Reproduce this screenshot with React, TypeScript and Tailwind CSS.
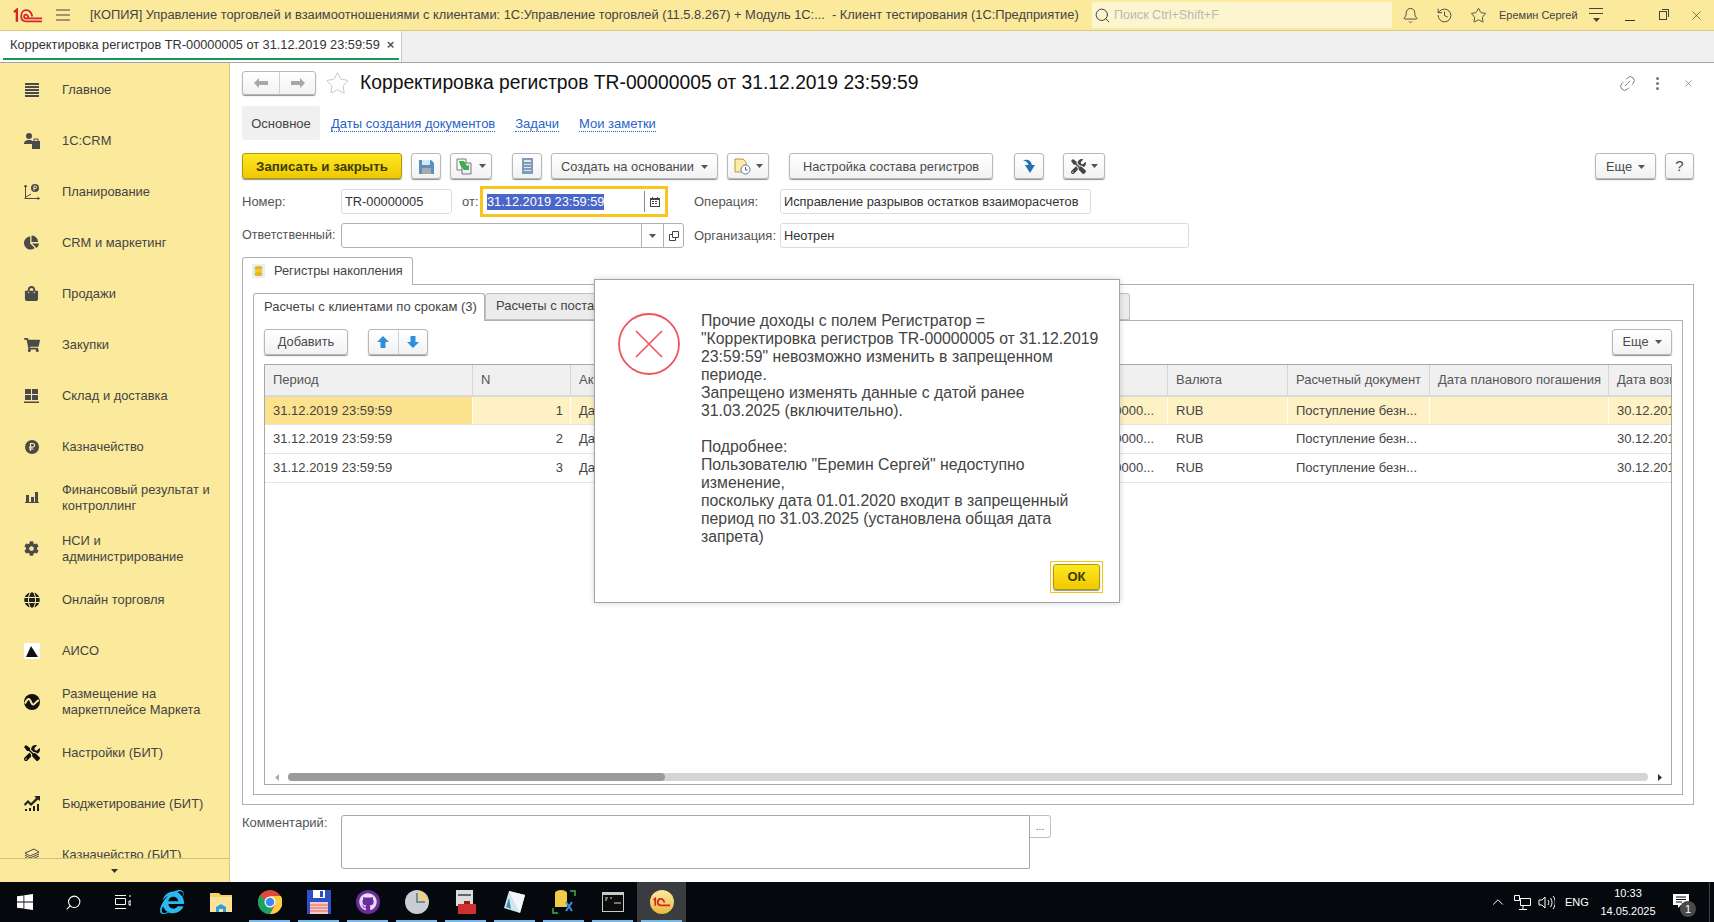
import type { ReactNode } from "react";
import { Bell, History, Star, Link2, Search, ChevronUp, X } from "lucide-react";
import {
  FaChartPie,
  FaShoppingBag,
  FaShoppingCart,
  FaCog,
  FaGlobe,
  FaTools,
  FaGithub,
  FaInternetExplorer,
} from "react-icons/fa";

const font = "font-['Liberation_Sans',Arial,sans-serif]";
const btn =
  "flex h-[26px] items-center justify-center rounded-[3px] border border-[#b8b8b8] bg-gradient-to-b from-white to-[#f2f2f2] text-[12.800px] text-[#4b4b4b] shadow-[0_1px_1px_#8f8f8f]";
const input = "flex h-[25px] items-center rounded-[3px] border border-[#dcdcdc] bg-white px-[3px] text-[12.800px] text-[#333]";
const rowCols = "grid grid-cols-[208px_98px_489px_108px_120px_142px_179px_62px]";

function Caret({ color = "#555" }: { color?: string }) {
  return (
    <svg width="7" height="4" viewBox="0 0 7 4" className="shrink-0">
      <path d="M0 0h7L3.500 4z" fill={color} />
    </svg>
  );
}

function Logo1C() {
  return (
    <svg width="30" height="15" viewBox="0 0 30 15" fill="none" stroke="#d8232a">
      <path d="M1 4l3-2.500V14" strokeWidth="2.400" />
      <path d="M20 8.500C19 4 16 2 13.500 2 10.500 2 8.500 4.500 8.500 8s2 5.500 5 5.500H30" strokeWidth="1.800" />
      <path d="M16 9.500c-.5-2-1.500-3-2.700-3-1.200 0-1.800 1-1.800 2 0 1 .8 2 2 2H30" strokeWidth="1.800" />
    </svg>
  );
}

function Burger({ w = 14, gap = 5, color = "#444" }: { w?: number; gap?: number; color?: string }) {
  return (
    <svg width={w} height={gap * 2 + 2} viewBox={`0 0 ${w} ${gap * 2 + 2}`}>
      <path d={`M0 1h${w}M0 ${gap + 1}h${w}M0 ${gap * 2 + 1}h${w}`} stroke={color} strokeWidth="1.200" />
    </svg>
  );
}

function TopBar() {
  return (
    <div className="flex h-[31px] shrink-0 items-center border-b border-[#dcca7e] bg-[#fbe99c] text-[#444]">
      <div className="ml-[13px] flex w-[29px] items-center">
        <Logo1C />
      </div>
      <div className="ml-[14px] flex w-[14px]">
        <Burger />
      </div>
      <div className="ml-[20px] w-[992px] shrink-0 whitespace-nowrap text-[12.850px] text-[#444]">
        [КОПИЯ] Управление торговлей и взаимоотношениями с клиентами: 1С:Управление торговлей (11.5.8.267) + Модуль 1С:...&nbsp;&nbsp;- Клиент тестирования (1С:Предприятие)
      </div>
      <div className="ml-[10px] flex h-[26px] w-[300px] shrink-0 items-center rounded-[2px] bg-[#fdf5d0] pl-[2px]">
        <Search size={17} strokeWidth={1.300} className="text-[#333]" />
        <span className="ml-[3px] text-[12.500px] text-[#b9b9b0]">Поиск Ctrl+Shift+F</span>
      </div>
      <Bell size={17} strokeWidth={1.300} className="ml-[10px] shrink-0" />
      <History size={17} strokeWidth={1.300} className="ml-[17px] shrink-0" />
      <Star size={17} strokeWidth={1.300} className="ml-[17px] shrink-0" />
      <span className="ml-[12px] w-[78px] shrink-0 whitespace-nowrap text-[11px] text-[#444]">Еремин Сергей</span>
      <div className="ml-[12px] flex w-[14px] shrink-0 flex-col items-center gap-[4px]">
        <div className="h-px w-[14px] bg-[#444]" />
        <div className="h-px w-[14px] bg-[#444]" />
        <Caret color="#444" />
      </div>
      <div className="ml-[22px] mt-[10px] h-px w-[10px] shrink-0 bg-[#333]" />
      <div className="relative ml-[24px] mt-[1px] h-[9px] w-[8px] shrink-0 border border-[#444]">
        <div className="absolute -right-[3px] -top-[3px] h-[8px] w-[7px] border-r border-t border-[#444]" />
      </div>
      <X size={15} strokeWidth={1} className="ml-[22px] shrink-0 text-[#333]" />
    </div>
  );
}

function TabBar() {
  return (
    <div className="flex h-[32px] shrink-0 border-b border-[#a5a5a5] bg-[#f0f0f0]">
      <div className="flex w-[402px] flex-col border-r border-[#c8c8c8] bg-white">
        <div className="flex h-[27px] items-center whitespace-nowrap pl-[10px] text-[12.770px] text-[#333]">
          Корректировка регистров TR-00000005 от 31.12.2019 23:59:59
          <span className="ml-[7px] text-[13px] font-bold text-[#555]">×</span>
        </div>
        <div className="ml-[3px] h-[2px] w-[396px] bg-[#15995a]" />
      </div>
    </div>
  );
}

const ic = "#4a4a4a";
const sidebarItems: { label: ReactNode; icon: ReactNode }[] = [
  {
    label: "Главное",
    icon: (
      <svg width="14" height="14" viewBox="0 0 14 14" fill={ic}>
        <path d="M0 0h14v2H0zM0 3h14v2H0zM0 6h14v2H0zM0 9h14v2H0zM0 12h14v2H0z" />
      </svg>
    ),
  },
  {
    label: "1С:CRM",
    icon: (
      <svg width="16" height="16" viewBox="0 0 16 16" fill={ic}>
        <circle cx="5" cy="3" r="3" />
        <path d="M0 11c0-3 2-4 5-4s3 .5 3 1v3zM8 8h8v8H8z" />
        <path d="M10 8V6h4v2" fill="none" stroke={ic} />
      </svg>
    ),
  },
  {
    label: "Планирование",
    icon: (
      <svg width="16" height="16" viewBox="0 0 16 16" fill="none" stroke={ic}>
        <path d="M1.500 1v14M.5 14.500h15M1.500 1L0 3M1.500 1L3 3M15.500 14.500l-2-1.500M15.500 14.500l-2 1M2 13l5-3" />
        <circle cx="11" cy="4" r="4" fill={ic} stroke="none" />
        <path d="M10 6.500V2h1.500a1 1 0 010 2.500H9.500" stroke="#fbe99c" />
      </svg>
    ),
  },
  { label: "CRM и маркетинг", icon: <FaChartPie size={15} color={ic} /> },
  { label: "Продажи", icon: <FaShoppingBag size={15} color={ic} /> },
  { label: "Закупки", icon: <FaShoppingCart size={16} color={ic} /> },
  {
    label: "Склад и доставка",
    icon: (
      <svg width="15" height="14" viewBox="0 0 15 14" fill={ic}>
        <path d="M1 0h6v5H1zM8 0h6v5H8zM1 6h6v5H1zM8 6h6v5H8zM0 12.500h15V14H0z" />
      </svg>
    ),
  },
  {
    label: "Казначейство",
    icon: (
      <svg width="14" height="14" viewBox="0 0 14 14">
        <circle cx="7" cy="7" r="7" fill={ic} />
        <path d="M5.500 11V3.500h2.200a1.800 1.800 0 010 3.700H4M4 9h4.500" stroke="#fbe99c" fill="none" strokeWidth="1.200" />
      </svg>
    ),
  },
  {
    label: (
      <>
        Финансовый результат и
        <br />
        контроллинг
      </>
    ),
    icon: (
      <svg width="14" height="11" viewBox="0 0 14 11" fill={ic}>
        <path d="M1 3h3v7H1zM6 5h3v5H6zM10 0h3v10h-3zM0 10h14v1H0z" />
      </svg>
    ),
  },
  {
    label: (
      <>
        НСИ и
        <br />
        администрирование
      </>
    ),
    icon: <FaCog size={15} color={ic} />,
  },
  { label: "Онлайн торговля", icon: <FaGlobe size={16} color="#222" /> },
  {
    label: "АИСО",
    icon: (
      <svg width="16" height="16" viewBox="0 0 16 16">
        <path d="M0 0h16v16H0z" fill="#fff" />
        <path d="M7 3L2 14h12z" fill="#111" />
      </svg>
    ),
  },
  {
    label: (
      <>
        Размещение на
        <br />
        маркетплейсе Маркета
      </>
    ),
    icon: (
      <svg width="16" height="16" viewBox="0 0 16 16">
        <circle cx="8" cy="8" r="8" fill="#111" />
        <path d="M1 9.500C3 5 4.500 4 6 6s1.500 5 3.500 4.500S13 6 15 6.500" stroke="#fbe99c" strokeWidth="2" fill="none" />
      </svg>
    ),
  },
  { label: "Настройки (БИТ)", icon: <FaTools size={16} color="#111" /> },
  {
    label: "Бюджетирование (БИТ)",
    icon: (
      <svg width="16" height="15" viewBox="0 0 16 15" fill="#222">
        <path d="M0 8l4-4 3 3 5-5-1.500-2H16v5l-2-1.500-7 6.500-3-3-3 3z" />
        <path d="M1 13h2v2H1zM5 12h2v3H5zM9 10h2v5H9zM13 8h2v7h-2z" />
      </svg>
    ),
  },
  {
    label: "Казначейство (БИТ)",
    icon: (
      <svg width="16" height="13" viewBox="0 0 16 13" fill="none" stroke={ic}>
        <path d="M1 5l9-4 5 3-9 4zM1 7l5 3 9-4M1 9l5 3 9-4" />
      </svg>
    ),
  },
];

function Sidebar() {
  return (
    <div className="flex w-[230px] shrink-0 flex-col border-r border-[#d9c884] bg-[#fbe99c]">
      <div className="min-h-0 flex-1 overflow-hidden pt-[1px]">
        {sidebarItems.map((item, i) => (
          <div key={i} className="flex h-[51px] items-center">
            <div className="flex w-[62px] shrink-0 justify-center pl-[1px]">{item.icon}</div>
            <div className="text-[12.900px] leading-[16px] text-[#444]">{item.label}</div>
          </div>
        ))}
      </div>
      <div className="flex h-[24px] shrink-0 items-center justify-center border-t border-[#cfc07c]">
        <Caret color="#333" />
      </div>
    </div>
  );
}

function FormToolbar() {
  return (
    <div className="mt-[13px] flex">
      <div className={`${btn} w-[160px] !border-[#b09a00] !from-[#fee81f] !to-[#efc800] pt-px !text-[13.300px] font-bold !text-[#3d3d00]`}>Записать и закрыть</div>
      <div className={`${btn} ml-[9px] w-[30px]`}>
        <svg width="15" height="15" viewBox="0 0 15 15">
          <path d="M0 1h12l3 3v11H0z" fill="#5b8fc0" />
          <path d="M3 1h8v5H3z" fill="#d8e6f2" />
          <path d="M3 9h9v6H3z" fill="#a9a9a9" />
        </svg>
      </div>
      <div className={`${btn} ml-[9px] w-[42px] gap-[6px]`}>
        <svg width="17" height="17" viewBox="0 0 17 17">
          <path d="M1 1h9v11H1z" fill="#fff" stroke="#777" />
          <path d="M6 5h9v11H6z" fill="#eef" stroke="#777" />
          <path d="M3 3h5l3 5 2-1v5H8L4 7z" fill="#3fae49" />
        </svg>
        <Caret />
      </div>
      <div className={`${btn} ml-[20px] w-[30px]`}>
        <svg width="11" height="16" viewBox="0 0 11 16">
          <path d="M0 0h11v16H0z" fill="#7f9bb8" />
          <path d="M2 2h7v2H2zM2 6h7v1H2zM2 9h7v1H2zM2 12h7v1H2z" fill="#dde6ef" />
        </svg>
      </div>
      <div className={`${btn} ml-[9px] w-[167px] gap-[7px] pt-px`}>
        Создать на основании
        <Caret />
      </div>
      <div className={`${btn} ml-[9px] w-[42px] gap-[5px]`}>
        <svg width="17" height="17" viewBox="0 0 17 17">
          <path d="M1 1h8l3 3v10H1z" fill="#fde9a8" stroke="#b89a3c" />
          <circle cx="11.500" cy="11.500" r="4.500" fill="#fff" stroke="#4a7fb5" />
          <path d="M11.500 9v3h2" stroke="#d33" fill="none" />
        </svg>
        <Caret />
      </div>
      <div className={`${btn} ml-[20px] w-[204px] pt-px`}>Настройка состава регистров</div>
      <div className={`${btn} ml-[21px] w-[30px]`}>
        <svg width="14" height="16" viewBox="0 0 14 16">
          <path d="M1 2.500c4-2 8-.5 9 4.500h3l-5 8-5-8h3.500C6 4.500 4 3 1 2.500z" fill="#2270b4" />
        </svg>
      </div>
      <div className={`${btn} ml-[19px] w-[42px] gap-[5px]`}>
        <FaTools size={15} color="#444" />
        <Caret />
      </div>
      <div className="flex-1" />
      <div className={`${btn} w-[61px] gap-[6px] pt-px`}>
        Еще
        <Caret />
      </div>
      <div className={`${btn} ml-[9px] w-[29px] pt-px !text-[15px]`}>?</div>
    </div>
  );
}

type Row = { active?: boolean; n: number };
const rows: Row[] = [{ active: true, n: 1 }, { n: 2 }, { n: 3 }];

function RegTable() {
  return (
    <div className="mt-[9px] flex min-h-0 flex-1 flex-col overflow-hidden border border-[#a8a8a8] bg-white text-[13px] text-[#444]">
      <div className={`${rowCols} h-[32px] shrink-0 border-b-2 border-[#d9d9d9] bg-[#f0f0f0] text-[#555]`}>
        {["Период", "N", "Акт", "", "Валюта", "Расчетный документ", "Дата планового погашения", "Дата возврата"].map((h, i) => (
          <div key={i} className="flex items-center overflow-hidden whitespace-nowrap border-r border-[#d6d6d6] px-[8px] pb-px last:border-r-0">
            {h}
          </div>
        ))}
      </div>
      {rows.map((r) => {
        const bg = r.active ? "bg-[#fef1c4]" : "bg-white";
        const cell = `flex items-center overflow-hidden whitespace-nowrap border-r border-white px-[8px] ${bg}`;
        return (
          <div key={r.n} className={`${rowCols} ${r.active ? "h-[28px]" : "h-[29px]"} shrink-0 border-b border-[#e4e4e4]`}>
            <div className={`${cell} ${r.active ? "!bg-[#fde28e]" : ""}`}>31.12.2019 23:59:59</div>
            <div className={`${cell} justify-end !pr-[7px]`}>{r.n}</div>
            <div className={cell}>Да</div>
            <div className={`${cell} justify-end !pr-[13px]`}>0000...</div>
            <div className={cell}>RUB</div>
            <div className={cell}>Поступление безн...</div>
            <div className={cell} />
            <div className={`${cell} border-r-0`}>30.12.2019</div>
          </div>
        );
      })}
      <div className="flex-1" />
      <div className="mb-[3px] flex h-[8px] shrink-0 items-center">
        <div className="flex w-[23px] justify-center">
          <svg width="4" height="7" viewBox="0 0 4 7">
            <path d="M4 0v7L0 3.500z" fill="#aaa" />
          </svg>
        </div>
        <div className="h-[8px] flex-1 rounded-[4px] bg-[#d4d4d4]">
          <div className="h-[8px] w-[377px] rounded-[4px] bg-[#9b9b9b]" />
        </div>
        <div className="flex w-[23px] justify-center">
          <svg width="4" height="7" viewBox="0 0 4 7">
            <path d="M0 0v7l4-3.500z" fill="#333" />
          </svg>
        </div>
      </div>
    </div>
  );
}

function Form() {
  return (
    <div className="flex min-w-0 flex-1 flex-col bg-white pl-[12px] pr-[20px] pt-[8px]">
      <div className="flex h-[24px] items-center">
        <div className={`${btn} !h-[24px] w-[74px] !justify-start`}>
          <div className="flex h-full w-[37px] items-center justify-center border-r border-[#d0d0d0]">
            <svg width="14" height="10" viewBox="0 0 14 10">
              <path d="M0 5l5-5v3h9v4H5v3z" fill="#a8a8a8" />
            </svg>
          </div>
          <div className="flex h-full w-[35px] items-center justify-center">
            <svg width="14" height="10" viewBox="0 0 14 10">
              <path d="M14 5L9 0v3H0v4h9v3z" fill="#a8a8a8" />
            </svg>
          </div>
        </div>
        <Star size={25} strokeWidth={0.800} className="ml-[9px] text-[#bdbdbd]" />
        <div className="ml-[10px] whitespace-nowrap text-[19.300px] text-[#111]">Корректировка регистров TR-00000005 от 31.12.2019 23:59:59</div>
        <div className="flex-1" />
        <Link2 size={19} strokeWidth={1} className="-rotate-45 text-[#666]" />
        <div className="ml-[19px] flex flex-col gap-[2px]">
          <div className="h-[3px] w-[3px] rounded-full bg-[#777]" />
          <div className="h-[3px] w-[3px] rounded-full bg-[#777]" />
          <div className="h-[3px] w-[3px] rounded-full bg-[#777]" />
        </div>
        <X size={11} strokeWidth={1.200} className="ml-[24px] text-[#555]" />
      </div>

      <div className="mt-[11px] flex h-[34px] items-center text-[13px]">
        <div className="flex h-[34px] w-[78px] items-center justify-center rounded-[3px] bg-[#f0f0f0] pt-[2px] text-[#444]">Основное</div>
        <a className="ml-[11px] mt-[2px] border-b border-dotted border-[#2a63c4] leading-[14px] text-[#2a63c4]">Даты создания документов</a>
        <a className="ml-[20px] mt-[2px] border-b border-dotted border-[#2a63c4] leading-[14px] text-[#2a63c4]">Задачи</a>
        <a className="ml-[20px] mt-[2px] border-b border-dotted border-[#2a63c4] leading-[14px] text-[#2a63c4]">Мои заметки</a>
      </div>

      <FormToolbar />

      <div className="mt-[10px] flex h-[25px] items-center text-[13px] text-[#555]">
        <div className="w-[99px] shrink-0">Номер:</div>
        <div className={`${input} w-[111px]`}>TR-00000005</div>
        <div className="ml-[10px] w-[18px] shrink-0">от:</div>
        <div className="-my-[3px] flex h-[31px] w-[188px] shrink-0 items-center border-[3px] border-[#f7c51e] bg-white pl-[4px] text-[12.800px]">
          <span className="bg-[#4a66c9] leading-[16px] text-white">31.12.2019 23:59:59</span>
          <div className="flex-1" />
          <div className="h-[21px] w-px bg-[#888]" />
          <div className="flex w-[20px] justify-center pr-[1px]">
            <svg width="10" height="10" viewBox="0 0 10 10" fill="#444">
              <path d="M0 1h10v9H0zM1 3v6h8V3z" fillRule="evenodd" />
              <path d="M2 0h1v2H2zM7 0h1v2H7zM2 4h2v1H2zM5 4h2v1H5zM2 6h2v1H2zM5 6h2v1H5z" />
            </svg>
          </div>
        </div>
        <div className="ml-[26px] w-[86px] shrink-0">Операция:</div>
        <div className={`${input} w-[311px] whitespace-nowrap`}>Исправление разрывов остатков взаиморасчетов</div>
      </div>

      <div className="mt-[9px] flex h-[25px] items-center text-[13px] text-[#555]">
        <div className="w-[99px] shrink-0 text-[12.600px]">Ответственный:</div>
        <div className="flex h-[25px] w-[343px] rounded-[3px] border border-[#b0b0b0] bg-white">
          <div className="flex-1" />
          <div className="flex w-[22px] items-center justify-center border-l border-[#b0b0b0]">
            <Caret />
          </div>
          <div className="flex w-[20px] items-center justify-center border-l border-[#b0b0b0]">
            <svg width="10" height="10" viewBox="0 0 10 10" fill="none" stroke="#444">
              <path d="M3.500.5h6v6h-6zM3.500 3.500H.5v6h6V6.500" />
            </svg>
          </div>
        </div>
        <div className="ml-[10px] w-[86px] shrink-0">Организация:</div>
        <div className={`${input} w-[409px]`}>Неотрен</div>
      </div>

      <div className="mt-[9px] flex">
        <div className="relative z-10 -mb-px flex h-[28px] w-[171px] items-center rounded-t-[3px] border border-b-0 border-[#b0b0b0] bg-white pb-[2px] pl-[9px] text-[12.800px] text-[#444]">
          <svg width="13" height="14" viewBox="0 0 13 14">
            <path d="M0 0h13v14H0z" fill="#e8eef5" />
            <ellipse cx="6.500" cy="4" rx="4" ry="2" fill="#e6b422" />
            <ellipse cx="6.500" cy="7" rx="4" ry="2" fill="#f2c838" />
            <ellipse cx="6.500" cy="10" rx="4" ry="2" fill="#e6b422" />
          </svg>
          <span className="ml-[9px] whitespace-nowrap">Регистры накопления</span>
        </div>
      </div>
      <div className="flex min-h-0 flex-1 flex-col border border-[#b0b0b0] px-[10px] pb-[9px] pt-[8px]">
        <div className="flex text-[13px]">
          <div className="relative z-10 -mb-px flex h-[28px] w-[232px] items-center rounded-t-[3px] border border-b-0 border-[#b0b0b0] bg-white pb-[2px] pl-[10px] text-[#444]">
            Расчеты с клиентами по срокам (3)
          </div>
          <div className="flex h-[27px] w-[645px] items-center rounded-t-[3px] border border-[#c0c0c0] bg-[#ececec] pb-[1px] pl-[10px] text-[#444]">
            Расчеты с поставщиками по срокам
          </div>
        </div>
        <div className="flex min-h-0 flex-1 flex-col border border-[#b0b0b0] px-[10px] pb-[9px] pt-[8px]">
          <div className="flex">
            <div className={`${btn} w-[84px]`}>Добавить</div>
            <div className={`${btn} ml-[20px] w-[60px]`}>
              <div className="flex h-full flex-1 items-center justify-center border-r border-[#d0d0d0]">
                <svg width="12" height="12" viewBox="0 0 12 12">
                  <path d="M6 0l6 6H8.500v6h-5V6H0z" fill="#2f8fdc" />
                </svg>
              </div>
              <div className="flex h-full flex-1 items-center justify-center">
                <svg width="12" height="12" viewBox="0 0 12 12">
                  <path d="M6 12L0 6h3.500V0h5v6H12z" fill="#2f8fdc" />
                </svg>
              </div>
            </div>
            <div className="flex-1" />
            <div className={`${btn} w-[60px] gap-[6px]`}>
              Еще
              <Caret />
            </div>
          </div>
          <RegTable />
        </div>
      </div>

      <div className="mb-[13px] mt-[10px] flex h-[54px] shrink-0 text-[13px] leading-[16px] text-[#555]">
        <div className="w-[99px] shrink-0">Комментарий:</div>
        <div className="h-[54px] w-[689px] rounded-l-[3px] border border-[#a8a8a8] bg-white" />
        <div className="flex h-[23px] w-[21px] items-center justify-center rounded-r-[3px] border border-l-0 border-[#c0c0c0] text-[10px] text-[#555]">...</div>
      </div>
    </div>
  );
}

function ErrorDialog() {
  return (
    <div className="absolute left-[594px] top-[279px] z-20 w-[526px] border border-[#a3a3a3] bg-white pb-[9px] pl-[23px] pr-[16px] pt-[33px] shadow-[0_0_6px_rgba(0,0,0,0.18)]">
      <div className="flex">
        <svg width="62" height="62" viewBox="0 0 62 62" fill="none" stroke="#f0545c" className="shrink-0">
          <circle cx="31" cy="31" r="30" strokeWidth="1.800" />
          <path d="M18 18l26 26M44 18L18 44" strokeWidth="1.600" />
        </svg>
        <div className="ml-[21px] -mt-px mb-px whitespace-nowrap text-[15.800px] leading-[18px] text-[#444]">
          Прочие доходы с полем Регистратор =
          <br />
          "Корректировка регистров TR-00000005 от 31.12.2019
          <br />
          23:59:59" невозможно изменить в запрещенном
          <br />
          периоде.
          <br />
          Запрещено изменять данные с датой ранее
          <br />
          31.03.2025 (включительно).
          <br />
          <br />
          Подробнее:
          <br />
          Пользователю "Еремин Сергей" недоступно
          <br />
          изменение,
          <br />
          поскольку дата 01.01.2020 входит в запрещенный
          <br />
          период по 31.03.2025 (установлена общая дата
          <br />
          запрета)
        </div>
      </div>
      <div className="mt-[14px] flex justify-end">
        <div className="border border-[#f5c518] p-[2px]">
          <div className={`${btn} w-[47px] !border-[#b09a00] !from-[#fee81f] !to-[#efc800] !text-[13px] font-bold !text-[#3d3d00]`}>ОК</div>
        </div>
      </div>
    </div>
  );
}

function Tb({ children, active, run }: { children: ReactNode; active?: boolean; run?: boolean }) {
  return (
    <div className={`relative flex h-[40px] w-[49px] shrink-0 items-center justify-center ${active ? "bg-[#3a3c40]" : ""}`}>
      {children}
      {run && <div className="absolute bottom-0 left-[4px] right-[4px] h-[2px] bg-[#76b9ed]" />}
    </div>
  );
}

function Taskbar() {
  return (
    <div className="flex h-[40px] shrink-0 items-center bg-[#05080c] text-white">
      <Tb>
        <svg width="16" height="16" viewBox="0 0 16 16" fill="#fff">
          <path d="M0 2.300l6.500-.9v6.200H0zM7.300 1.300L16 0v7.600H7.300zM0 8.400h6.500v6.200L0 13.700zM7.300 8.400H16V16l-8.700-1.200z" />
        </svg>
      </Tb>
      <Tb>
        <Search size={17} strokeWidth={1.500} className="-scale-x-100" />
      </Tb>
      <Tb>
        <svg width="16" height="16" viewBox="0 0 16 16" fill="none" stroke="#fff">
          <path d="M.5 4.500h10v6h-10zM0 1.500h11M0 14.500h11M14 2h2M14 7h2v4h-2z" />
        </svg>
      </Tb>
      <Tb>
        <div className="relative">
          <FaInternetExplorer size={24} color="#2bb8ee" />
        </div>
      </Tb>
      <Tb>
        <svg width="22" height="20" viewBox="0 0 22 20">
          <path d="M0 1h9l2 2h11v17H0z" fill="#f6d365" />
          <path d="M0 5h22v15H0z" fill="#fbe39a" />
          <path d="M6 20v-5l5-3 5 3v5h-3v-3H9v3z" fill="#2f9fe0" />
        </svg>
      </Tb>
      <Tb run>
        <svg width="24" height="24" viewBox="0 0 24 24">
          <circle cx="12" cy="12" r="12" fill="#dd4b3e" />
          <path d="M1.600 18A12 12 0 011.600 6L12 12l5 0 -5 12A12 12 0 011.600 18z" fill="#1aa260" />
          <path d="M12 6h10.900A12 12 0 0112 24l5-9z" fill="#ffce44" />
          <circle cx="12" cy="12" r="5.500" fill="#fff" />
          <circle cx="12" cy="12" r="4.300" fill="#4285f4" />
        </svg>
      </Tb>
      <Tb run>
        <svg width="24" height="24" viewBox="0 0 24 24">
          <path d="M0 0h24v24H0z" fill="#2b4fc4" />
          <path d="M6 0h12v8H6z" fill="#fff" />
          <path d="M13 1h3v6h-3z" fill="#2b4fc4" />
          <path d="M3 12h18v12H3z" fill="#f9c6c6" />
          <path d="M3 15h18M3 18h18M3 21h18" stroke="#d66" />
        </svg>
      </Tb>
      <Tb run>
        <div className="flex h-[24px] w-[24px] items-center justify-center rounded-full bg-[#6a2c9c]">
          <FaGithub size={18} color="#e8dcf5" />
        </div>
      </Tb>
      <Tb run>
        <svg width="24" height="24" viewBox="0 0 24 24">
          <circle cx="12" cy="12" r="12" fill="#c9ced6" />
          <path d="M12 12V1A11 11 0 0123 12z" fill="#f0cf8a" />
          <path d="M12 3v9h8" stroke="#4a7a9a" strokeWidth="1.500" fill="none" />
        </svg>
      </Tb>
      <Tb run>
        <svg width="24" height="24" viewBox="0 0 24 24">
          <path d="M2 0h17v16H2z" fill="#dcdcdc" />
          <path d="M4 4h13v2H4z" fill="#666" />
          <path d="M4 14h18v10H4z" fill="#cf2f2f" />
          <path d="M10 11h6v3h-6z" fill="#8f1f1f" />
        </svg>
      </Tb>
      <Tb run>
        <svg width="24" height="24" viewBox="0 0 24 24">
          <path d="M6 1l16 4-5 18L1 18z" fill="#cfe6ee" />
          <path d="M6 1l16 4-5 18z" fill="#f4f7f9" />
          <path d="M6 8l-3 9 5 2z" fill="#3f8fa8" />
        </svg>
      </Tb>
      <Tb run>
        <svg width="24" height="24" viewBox="0 0 24 24" fill="none">
          <ellipse cx="9" cy="3" rx="6" ry="3" fill="#f0cb45" />
          <path d="M3 3h12v14H3z" fill="#f0cb45" />
          <path d="M1 18v5h5M23 6V1h-5" stroke="#3fae49" strokeWidth="1.500" />
          <path d="M14 12l6 9M20 12l-6 9" stroke="#3b8fe0" strokeWidth="2" />
        </svg>
      </Tb>
      <Tb run>
        <svg width="22" height="20" viewBox="0 0 22 20">
          <path d="M0 0h22v20H0z" fill="#c9c9c9" />
          <path d="M1 3h20v16H1z" fill="#0c0c0c" />
          <path d="M3 6h3M3 8h2M8 6h2M12 11h7" stroke="#ddd" />
        </svg>
      </Tb>
      <Tb run active>
        <div className="flex h-[24px] w-[24px] items-center justify-center rounded-full bg-gradient-to-b from-[#fbeb9a] to-[#e8b93a]">
          <svg width="17" height="10" viewBox="0 0 30 15" fill="none" stroke="#d8232a">
            <path d="M1 4l3-2.500V14" strokeWidth="3" />
            <path d="M20 8.500C19 4 16 2 13.500 2 10.500 2 8.500 4.500 8.500 8s2 5.500 5 5.500H30" strokeWidth="3" />
          </svg>
        </div>
      </Tb>
      <div className="flex-1" />
      <ChevronUp size={18} strokeWidth={1.300} />
      <svg width="17" height="15" viewBox="0 0 17 15" fill="none" stroke="#fff" className="ml-[7px]">
        <path d="M3.500 3.500h13v7h-10V4M9 11v3M5 14.500h8" />
        <path d="M.5.500h5v5h-5z" fill="#05080c" />
      </svg>
      <svg width="17" height="15" viewBox="0 0 17 15" fill="none" stroke="#fff" className="ml-[7px]">
        <path d="M1 5h3l3-3v11l-3-3H1zM10 5c1 1.500 1 3.500 0 5M12.500 3c2 2.500 2 6.500 0 9M15 1c3 3.500 3 9.500 0 13" />
      </svg>
      <span className="ml-[10px] w-[24px] text-[11px]">ENG</span>
      <div className="ml-[9px] flex w-[60px] flex-col items-center text-[11px] leading-[18px]">
        <span>10:33</span>
        <span>14.05.2025</span>
      </div>
      <div className="relative ml-[15px] h-[16px] w-[16px]">
        <svg width="16" height="14" viewBox="0 0 16 14" fill="#fff">
          <path d="M0 0h16v11H8l-3 3v-3H0z" />
          <path d="M3 3h10M3 5.500h10M3 8h6" stroke="#05080c" />
        </svg>
        <div className="absolute left-[7px] top-[7px] flex h-[16px] w-[16px] items-center justify-center rounded-full bg-[#4a4a4a] text-[11px] text-white">1</div>
      </div>
      <div className="ml-[20px] mr-[4px] h-[40px] w-px bg-[#444]" />
    </div>
  );
}

export default function App() {
  return (
    <div className={`relative flex h-[922px] w-[1714px] flex-col overflow-hidden bg-white ${font}`}>
      <TopBar />
      <TabBar />
      <div className="flex min-h-0 flex-1">
        <Sidebar />
        <Form />
      </div>
      <Taskbar />
      <ErrorDialog />
    </div>
  );
}
